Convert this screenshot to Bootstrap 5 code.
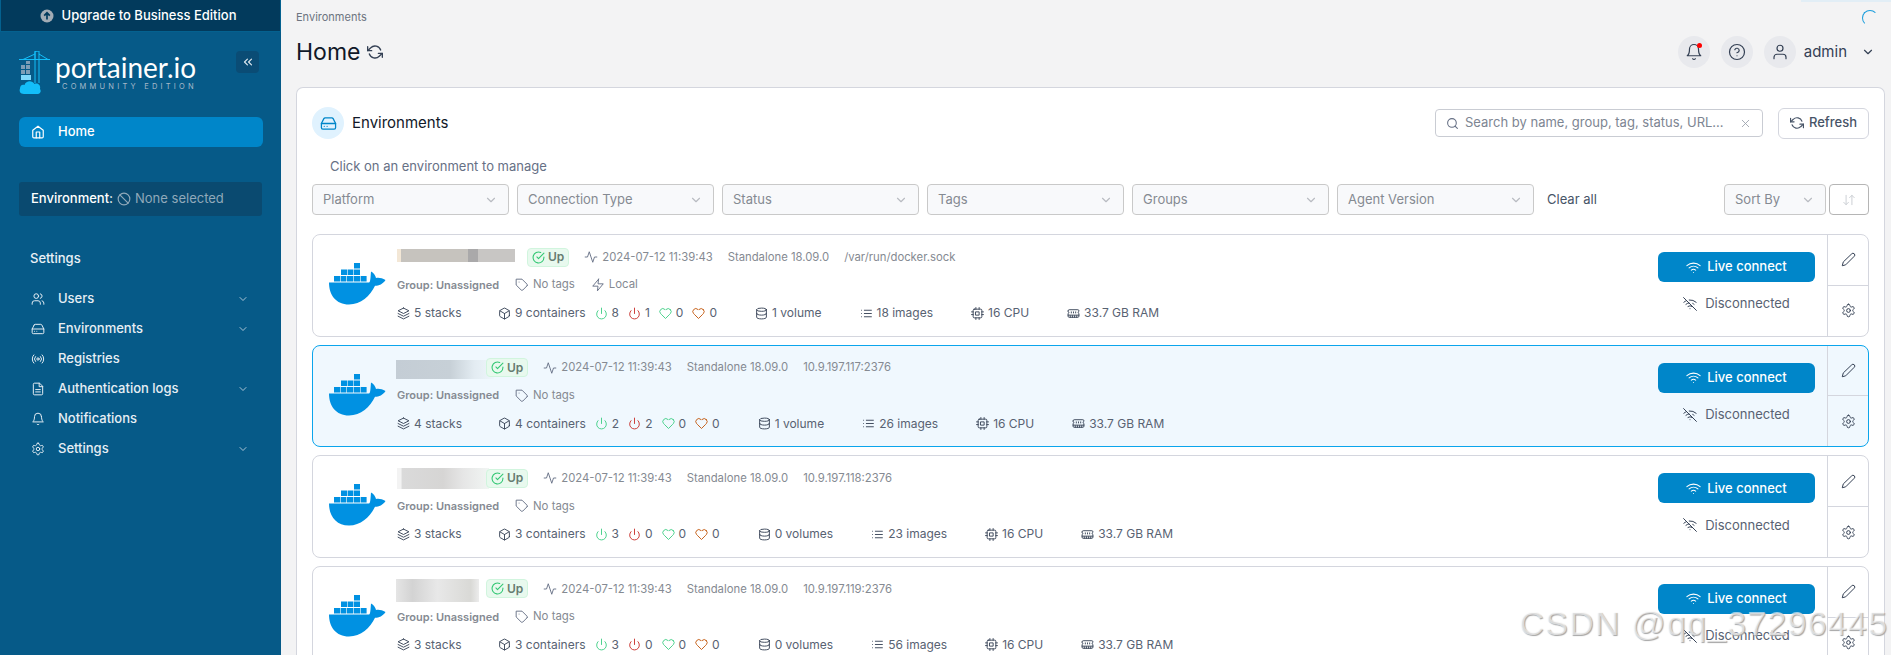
<!DOCTYPE html>
<html lang="en">
<head>
    <meta charset="UTF-8">
    <title>Portainer - Home</title>
    <link href="https://cdn.jsdelivr.net/npm/bootstrap@5.3.0/dist/css/bootstrap.min.css" rel="stylesheet">
    <style>
        html, body { height: 100%; overflow: hidden; }
        body { background: #f3f3f4; font-family: Inter, "Liberation Sans", sans-serif; font-size: 13px; color: #344054; }
        .ico { width: 14px; height: 14px; fill: none; stroke: currentColor; stroke-width: 2; stroke-linecap: round; stroke-linejoin: round; flex: none; }

        .side-bar { width: 281px; height: 655px; background: #065a88; color: #e6eef4; flex: none; }
        .upgrade-bar { height: 32px; background: #023a5c; border: 1px solid #04618f; border-top: 0; color: #fff; font-weight: 500; font-size: 13px; padding-right: 5px; }
        .up-dot { width: 14px; height: 14px; }
        .logo-zone { height: 85px; padding: 19px 18px 0 19px; }
        .logo-word { font-family: Lato, sans-serif; font-weight: 400; font-size: 28px; line-height: 30px; color: #fff; margin-top: 1px; }
        .logo-sub { font-size: 7.5px; line-height: 9px; letter-spacing: 3.2px; color: #a5b9c8; padding-left: 7px; white-space: nowrap; }
        .collapse-btn { width: 23px; height: 22px; background: #0a4c75; border-radius: 4px; color: #dfe8ee; margin-left: auto; margin-right: 4px; }
        .nav-home { margin: 0 18px 0 19px; height: 30px; background: #0086c9; border-radius: 6px; color: #fff; padding-left: 12px; gap: 13px; font-weight: 500; }
        .env-pick { margin: 35px 19px 0; height: 34px; background: #0a4a70; border-radius: 3px; padding-left: 12px; color: #fff; font-weight: 500; gap: 4px; }
        .env-pick .none-sel { color: #90a9ba; font-weight: 400; gap: 4px; }
        .side-head { margin: 33px 0 0 30px; height: 20px; font-weight: 500; font-size: 13px; color: #eaf1f6; }
        .side-menu { margin-top: 15px; padding: 0 32px 0 31px; }
        .side-item { height: 30px; gap: 13px; font-weight: 500; color: #e6eef4; }
        .side-item .caret-ico { margin-left: auto; width: 12px; height: 12px; color: #c7d6e1; }
        .side-item .ico { stroke-width: 1.7; }

        .main-pane { padding: 0 6px 0 15px; min-width: 0; }
        .page-head { height: 87px; position: relative; }
        .crumb { font-size: 11px; color: #6c7480; padding-top: 11px; line-height: 13px; }
        .page-title { font-size: 23px; font-weight: 400; color: #101828; margin: 0; line-height: 28px; }
        .title-row { margin-top: 14px; gap: 7px; }
        .title-row .ico { width: 16px; height: 16px; color: #344054; }
        .round-btn { width: 32px; height: 32px; border-radius: 50%; background: #e8e9ed; color: #344054; position: relative; }
        .round-btn .ico { width: 18px; height: 18px; stroke-width: 1.6; }
        .bell-dot { position: absolute; top: 7px; right: 8px; width: 5px; height: 5px; border-radius: 50%; background: #f00; }
        .head-tools { position: absolute; top: 36px; right: 10px; gap: 11px; }
        .admin-name { font-size: 15px; color: #344054; margin-left: -3px; margin-right: 28px; }
        .spin-arc { position: absolute; top: 10px; right: 7px; width: 16px; height: 16px; border-radius: 50%; border: 1px solid transparent; border-top-color: #1a9ddc; border-left-color: #1a9ddc; }
        .load-bar { position: absolute; top: 0; right: -6px; width: 90px; height: 2px; background: #e2eef6; }

        .env-box { background: #fff; border: 1px solid #d4d6de; border-bottom: 0; border-radius: 7px 7px 0 0; padding: 19px 15px 0 15px; height: 568px; overflow: hidden; }
        .box-icon { width: 32px; height: 32px; border-radius: 50%; background: #e0f2fe; color: #0086c9; }
        .box-icon .ico { width: 17px; height: 17px; stroke-width: 1.8; }
        .box-title { font-size: 15px; font-weight: 400; color: #101828; margin-left: 8px; }
        .search-box { width: 328px; height: 28px; border: 1px solid #c9ccd3; border-radius: 4px; padding: 0 10px; gap: 6px; color: #667085; margin-left: auto; }
        .search-box .ico { width: 13px; height: 13px; }
        .search-txt { color: #7d8592; flex-grow: 1; font-size: 13px; white-space: nowrap; }
        .search-box .x-ico { color: #9aa1ac; width: 13px; height: 13px; stroke-width: 1.6; }
        .refresh-btn { width: 91px; height: 31px; margin-left: 15px; border: 1px solid #d4d6de; border-radius: 6px; background: #fff; color: #475467; font-size: 13px; font-weight: 500; padding: 0; gap: 5px; }
        .refresh-btn .ico { width: 14px; height: 14px; }
        .click-hint { margin: 17px 0 0 18px; height: 20px; color: #667085; line-height: 20px; font-size: 13px; }
        .filter-row { margin-top: 8px; gap: 8px; }
        .filter-sel { width: 197px; height: 31px; border: 1px solid #c9c9c9; border-radius: 4px; background: #f8f9fb; padding: 0 10px; color: #858a92; font-size: 13px; }
        .filter-sel .ico { margin-left: auto; width: 14px; height: 14px; color: #b9bcc2; }
        .clear-all { color: #475467; font-weight: 400; font-size: 13px; margin-left: 5px; }
        .sort-sel { width: 102px; margin-left: auto; }
        .order-btn { width: 40px; height: 31px; border: 1px solid #b5b5b5; border-radius: 4px; background: #fff; color: #c8ccd2; margin-left: -5px; }
        .order-btn .ico { width: 14px; height: 14px; stroke-width: 1.6; }

        .env-list { margin-top: 19px; }
        .env-item { height: 102.67px; margin-bottom: 8px; border: 1px solid #d4d6de; border-radius: 8px; background: #fff; }
        .env-item.picked { background: #f0f8fe; border-color: #0ba5ec; }
        .whale-ico { width: 57px; height: 42px; margin: 28px 11px 0 16px; flex: none; }
        .env-info { padding-top: 12px; min-width: 0; }
        .info-line { height: 20px; white-space: nowrap; font-size: 12px; }
        .info-line + .info-line { margin-top: 8px; }
        .line-one { color: #858a92; font-size: 11.3px; }
        .name-cell { position: relative; height: 20px; flex: none; width: 89px; }
        .name-cell.wide-name { width: 130px; }
        .name-mask { position: absolute; left: 0; display: block; }
        .mask-a { width: 118px; top: 2px; height: 13px; background: linear-gradient(90deg, #f3e7d6 0 3%, #c6c3be 3% 60%, #aaa9aa 60% 69%, #c8c6c4 69%); }
        .mask-b { width: 98px; top: 2px; height: 19px; left: -1px; background: linear-gradient(90deg, #c4cdd5 0, #c7d0d7 55%, #e3ecf2 80%, #eef6fb); }
        .mask-c { width: 92px; top: 0; height: 21px; background: linear-gradient(90deg, #f3f3f3 0 4%, #dadada 6%, #d6d5d4 50%, #e6e6e6 72%, #f1f5f3); }
        .mask-d { width: 83px; top: 0; height: 23px; left: -1px; background: linear-gradient(90deg, #e5e5e5 0, #d3d3d3 20%, #e8e8e8 50%, #d9d9d6 90%, #ececec); }
        .up-tag { height: 19px; padding: 0 4px; border: 1px solid #d1f5de; border-radius: 4px; background: #e8f9ee; color: #667c70; font-weight: 600; font-size: 12px; gap: 3px; margin-right: 15px; flex: none; position: relative; }
        .line-one .up-tag .ico { color: #32c773; width: 13px; height: 13px; stroke-width: 2; }
        .line-one .ico, .group-line .ico { width: 14px; height: 14px; color: #667085; stroke-width: 1.6; }
        .with-gap { gap: 4px; }
        .line-one .fact { margin-right: 15px; }
        .group-line { color: #858a92; gap: 16px; font-size: 11.4px; }
        .group-line b { font-weight: 600; font-size: 11px; }
        .stat-line { color: #586272; }
        .stat-line .ico { width: 13px; height: 13px; color: #344054; stroke-width: 1.7; }
        .stat-stacks { width: 101px; flex: none; }
        .stat-group { margin-right: 38px; }
        .hp-set { gap: 9px; margin-left: 9px; }
        .hp-set .with-gap { gap: 4px; }
        .stat-line .hp-set .ok { color: #3fcf85; }
        .stat-line .hp-set .bad { color: #c9302c; }
        .stat-line .hp-set .warn { color: #c2570c; }
        .act-zone { width: 157px; margin: 17px 12px 0 auto; flex: none; }
        .live-btn { height: 30px; width: 157px; background: #0086c9; border: 0; border-radius: 6px; color: #fff; font-size: 13px; font-weight: 500; padding: 0; gap: 6px; }
        .live-btn .ico { width: 15px; height: 15px; stroke-width: 1.7; }
        .off-state { margin-top: 11px; height: 22px; color: #586272; gap: 8px; font-size: 13px; }
        .off-state .ico { color: #344054; stroke-width: 1.7; }
        .side-acts { width: 41px; border-left: 1px solid #d4d6de; flex: none; }
        .side-acts > div { flex: 1 1 0; color: #344054; }
        .side-acts > div + div { border-top: 1px solid #d4d6de; }
        .side-acts .ico { stroke-width: 1.6; width: 15px; height: 15px; }
        .wm-text { position: absolute; right: 3px; bottom: 15px; font-family: "Liberation Sans", sans-serif; font-size: 34px; line-height: 34px; letter-spacing: 1.2px; color: rgba(255,255,255,.6); text-shadow: 1px 1px 1px #a5a5a5; white-space: nowrap; }
    </style>
</head>
<body class="d-flex position-relative">
    <svg width="0" height="0" class="position-absolute">
        <symbol id="i-home" viewBox="0 0 24 24"><path d="M3 9l9-7 9 7v11a2 2 0 0 1-2 2H5a2 2 0 0 1-2-2z"/><polyline points="9 22 9 12 15 12 15 22"/></symbol>
        <symbol id="i-users" viewBox="0 0 24 24"><path d="M16 21v-2a4 4 0 0 0-4-4H6a4 4 0 0 0-4 4v2"/><circle cx="9" cy="7" r="4"/><path d="M22 21v-2a4 4 0 0 0-3-3.87"/><path d="M16 3.13a4 4 0 0 1 0 7.75"/></symbol>
        <symbol id="i-drive" viewBox="0 0 24 24"><line x1="22" y1="12" x2="2" y2="12"/><path d="M5.45 5.11 2 12v6a2 2 0 0 0 2 2h16a2 2 0 0 0 2-2v-6l-3.45-6.89A2 2 0 0 0 16.76 4H7.24a2 2 0 0 0-1.79 1.11z"/><line x1="6" y1="16" x2="6.01" y2="16"/><line x1="10" y1="16" x2="10.01" y2="16"/></symbol>
        <symbol id="i-radio" viewBox="0 0 24 24"><circle cx="12" cy="12" r="2"/><path d="M16.24 7.76a6 6 0 0 1 0 8.49m-8.48-.01a6 6 0 0 1 0-8.49m11.31-2.82a10 10 0 0 1 0 14.14m-14.14 0a10 10 0 0 1 0-14.14"/></symbol>
        <symbol id="i-file" viewBox="0 0 24 24"><path d="M14 2H6a2 2 0 0 0-2 2v16a2 2 0 0 0 2 2h12a2 2 0 0 0 2-2V8z"/><polyline points="14 2 14 8 20 8"/><line x1="16" y1="13" x2="8" y2="13"/><line x1="16" y1="17" x2="8" y2="17"/></symbol>
        <symbol id="i-bell" viewBox="0 0 24 24"><path d="M18 8A6 6 0 0 0 6 8c0 7-3 9-3 9h18s-3-2-3-9"/><path d="M13.73 21a2 2 0 0 1-3.46 0"/></symbol>
        <symbol id="i-gear" viewBox="0 0 24 24"><path d="M12.22 2h-.44a2 2 0 0 0-2 2v.18a2 2 0 0 1-1 1.73l-.43.25a2 2 0 0 1-2 0l-.15-.08a2 2 0 0 0-2.73.73l-.22.38a2 2 0 0 0 .73 2.73l.15.1a2 2 0 0 1 1 1.72v.51a2 2 0 0 1-1 1.74l-.15.09a2 2 0 0 0-.73 2.73l.22.38a2 2 0 0 0 2.73.73l.15-.08a2 2 0 0 1 2 0l.43.25a2 2 0 0 1 1 1.73V20a2 2 0 0 0 2 2h.44a2 2 0 0 0 2-2v-.18a2 2 0 0 1 1-1.73l.43-.25a2 2 0 0 1 2 0l.15.08a2 2 0 0 0 2.73-.73l.22-.39a2 2 0 0 0-.73-2.73l-.15-.08a2 2 0 0 1-1-1.74v-.5a2 2 0 0 1 1-1.74l.15-.09a2 2 0 0 0 .73-2.73l-.22-.38a2 2 0 0 0-2.73-.73l-.15.08a2 2 0 0 1-2 0l-.43-.25a2 2 0 0 1-1-1.73V4a2 2 0 0 0-2-2z"/><circle cx="12" cy="12" r="3"/></symbol>
        <symbol id="i-down" viewBox="0 0 24 24"><polyline points="6 9 12 15 18 9"/></symbol>
        <symbol id="i-dleft" viewBox="0 0 24 24"><polyline points="11 17 6 12 11 7"/><polyline points="18 17 13 12 18 7"/></symbol>
        <symbol id="i-sync" viewBox="0 0 24 24"><path d="M1 4v6h6"/><path d="M23 20v-6h-6"/><path d="M20.49 9A9 9 0 0 0 5.64 5.64L1 10m22 4-4.64 4.36A9 9 0 0 1 3.51 15"/></symbol>
        <symbol id="i-help" viewBox="0 0 24 24"><circle cx="12" cy="12" r="10"/><path d="M9.09 9a3 3 0 0 1 5.83 1c0 2-3 3-3 3"/><line x1="12" y1="17" x2="12.01" y2="17"/></symbol>
        <symbol id="i-user" viewBox="0 0 24 24"><path d="M20 21v-2a4 4 0 0 0-4-4H8a4 4 0 0 0-4 4v2"/><circle cx="12" cy="7" r="4"/></symbol>
        <symbol id="i-search" viewBox="0 0 24 24"><circle cx="11" cy="11" r="8"/><line x1="21" y1="21" x2="16.65" y2="16.65"/></symbol>
        <symbol id="i-x" viewBox="0 0 24 24"><line x1="18" y1="6" x2="6" y2="18"/><line x1="6" y1="6" x2="18" y2="18"/></symbol>
        <symbol id="i-pulse" viewBox="0 0 24 24"><polyline points="22 12 18 12 15 21 9 3 6 12 2 12"/></symbol>
        <symbol id="i-check" viewBox="0 0 24 24"><path d="M22 11.08V12a10 10 0 1 1-5.93-9.14"/><polyline points="22 4 12 14.01 9 11.01"/></symbol>
        <symbol id="i-tag" viewBox="0 0 24 24"><path d="M20.59 13.41l-7.17 7.17a2 2 0 0 1-2.83 0L2 12V2h10l8.59 8.59a2 2 0 0 1 0 2.82z"/><line x1="7" y1="7" x2="7.01" y2="7"/></symbol>
        <symbol id="i-zap" viewBox="0 0 24 24"><polygon points="13 2 3 14 12 14 11 22 21 10 12 10 13 2"/></symbol>
        <symbol id="i-layers" viewBox="0 0 24 24"><polygon points="12 2 2 7 12 12 22 7 12 2"/><polyline points="2 17 12 22 22 17"/><polyline points="2 12 12 17 22 12"/></symbol>
        <symbol id="i-box" viewBox="0 0 24 24"><path d="M21 16V8a2 2 0 0 0-1-1.73l-7-4a2 2 0 0 0-2 0l-7 4A2 2 0 0 0 3 8v8a2 2 0 0 0 1 1.73l7 4a2 2 0 0 0 2 0l7-4A2 2 0 0 0 21 16z"/><polyline points="3.27 6.96 12 12.01 20.73 6.96"/><line x1="12" y1="22.08" x2="12" y2="12"/></symbol>
        <symbol id="i-power" viewBox="0 0 24 24"><path d="M18.36 6.64a9 9 0 1 1-12.73 0"/><line x1="12" y1="2" x2="12" y2="12"/></symbol>
        <symbol id="i-heart" viewBox="0 0 24 24"><path d="M20.84 4.61a5.5 5.5 0 0 0-7.78 0L12 5.67l-1.06-1.06a5.5 5.5 0 0 0-7.78 7.78l1.06 1.06L12 21.23l7.78-7.78 1.06-1.06a5.5 5.5 0 0 0 0-7.78z"/></symbol>
        <symbol id="i-db" viewBox="0 0 24 24"><ellipse cx="12" cy="5" rx="9" ry="3"/><path d="M21 12c0 1.66-4 3-9 3s-9-1.34-9-3"/><path d="M3 5v14c0 1.66 4 3 9 3s9-1.34 9-3V5"/></symbol>
        <symbol id="i-list" viewBox="0 0 24 24"><line x1="8" y1="6" x2="21" y2="6"/><line x1="8" y1="12" x2="21" y2="12"/><line x1="8" y1="18" x2="21" y2="18"/><line x1="3" y1="6" x2="3.01" y2="6"/><line x1="3" y1="12" x2="3.01" y2="12"/><line x1="3" y1="18" x2="3.01" y2="18"/></symbol>
        <symbol id="i-cpu" viewBox="0 0 24 24"><rect x="4" y="4" width="16" height="16" rx="2"/><rect x="9" y="9" width="6" height="6"/><line x1="9" y1="1" x2="9" y2="4"/><line x1="15" y1="1" x2="15" y2="4"/><line x1="9" y1="20" x2="9" y2="23"/><line x1="15" y1="20" x2="15" y2="23"/><line x1="20" y1="9" x2="23" y2="9"/><line x1="20" y1="14" x2="23" y2="14"/><line x1="1" y1="9" x2="4" y2="9"/><line x1="1" y1="14" x2="4" y2="14"/></symbol>
        <symbol id="i-ram" viewBox="0 0 24 24"><path d="M6 19v-3"/><path d="M10 19v-3"/><path d="M14 19v-3"/><path d="M18 19v-3"/><path d="M8 11V9"/><path d="M16 11V9"/><path d="M12 11V9"/><path d="M2 15h20"/><path d="M2 7a2 2 0 0 1 2-2h16a2 2 0 0 1 2 2v1.1a2 2 0 0 0 0 3.837V17a2 2 0 0 1-2 2H4a2 2 0 0 1-2-2v-5.1a2 2 0 0 0 0-3.837Z"/></symbol>
        <symbol id="i-wifi" viewBox="0 0 24 24"><path d="M5 12.55a11 11 0 0 1 14.08 0"/><path d="M1.42 9a16 16 0 0 1 21.16 0"/><path d="M8.53 16.11a6 6 0 0 1 6.95 0"/><line x1="12" y1="20" x2="12.01" y2="20"/></symbol>
        <symbol id="i-wifioff" viewBox="0 0 24 24"><line x1="1" y1="1" x2="23" y2="23"/><path d="M16.72 11.06A10.94 10.94 0 0 1 19 12.55"/><path d="M5 12.55a10.94 10.94 0 0 1 5.17-2.39"/><path d="M10.71 5.05A16 16 0 0 1 22.58 9"/><path d="M1.42 9a15.91 15.91 0 0 1 4.7-2.88"/><path d="M8.53 16.11a6 6 0 0 1 6.95 0"/><line x1="12" y1="20" x2="12.01" y2="20"/></symbol>
        <symbol id="i-pen" viewBox="0 0 24 24"><path d="M17 3a2.85 2.83 0 1 1 4 4L7.5 20.5 2 22l1.5-5.5Z"/></symbol>
        <symbol id="i-ban" viewBox="0 0 24 24"><circle cx="12" cy="12" r="10"/><line x1="4.93" y1="4.93" x2="19.07" y2="19.07"/></symbol>
        <symbol id="i-order" viewBox="0 0 24 24"><path d="m3 16 4 4 4-4"/><path d="M7 20V4"/><path d="m21 8-4-4-4 4"/><path d="M17 4v16"/></symbol>
        <symbol id="i-whale" viewBox="0 0 57 42">
            <g fill="#0091e2">
                <rect x="25" y="0" width="6" height="5.5"/>
                <rect x="12" y="6.5" width="6" height="5.5"/><rect x="18.6" y="6.5" width="5.8" height="5.5"/><rect x="25" y="6.5" width="6" height="5.5"/>
                <rect x="5" y="13" width="6" height="5.5"/><rect x="11.6" y="13" width="5.8" height="5.5"/><rect x="18" y="13" width="6.4" height="5.5"/><rect x="25" y="13" width="6" height="5.5"/><rect x="31.6" y="13" width="6" height="5.5"/>
                <path d="M0 19.5H40C41.5 19.5 41.5 14 42 8.5C45 10 46.5 13 47 15C50 14.5 53 15 56.5 17C54 21 50 22.8 46 22.8C41 33 32 41.5 20 41.5C7 41.5 0 32 0 19.5Z"/>
            </g>
        </symbol>
    </svg>

    <aside class="side-bar">
        <div class="upgrade-bar d-flex align-items-center justify-content-center gap-2">
            <svg class="up-dot" viewBox="0 0 14 14"><circle cx="7" cy="7" r="6.5" fill="#a3acb5"/><path d="M7 10.5V4M4.2 6.6 7 3.8l2.8 2.8" fill="none" stroke="#023a5c" stroke-width="1.7"/></svg>
            <span>Upgrade to Business Edition</span>
        </div>
        <div class="logo-zone d-flex">
            <svg width="32" height="44" viewBox="0 0 32 44" class="flex-none">
                <g fill="none" stroke="#13bef9" stroke-width="1">
                    <path d="M0 8.5H31M16 0V8.5M20 0 16 .5V32M20 0V32M16 3 4 8.5M20 3 29 8.5"/>
                </g>
                <g fill="#7d9db6"><rect x="2" y="14" width="4" height="4"/><rect x="7" y="14" width="4" height="4"/><rect x="2" y="19" width="4" height="4"/><rect x="7" y="19" width="4" height="4"/><rect x="7" y="10" width="4" height="3"/></g>
                <path d="M2 24H12V29H2Z" fill="#7fd8fb"/>
                <path d="M5 43C1 43 0 40 1 37.5 1 35 3 33 5.5 34 7 29.5 13 29 15.5 33 19 31.5 22 34.5 21 38 23 41 20.5 43.5 17 43Z" fill="#13bef9"/>
            </svg>
            <div class="ms-1">
                <div class="logo-word">portainer.io</div>
                <div class="logo-sub">COMMUNITY EDITION</div>
            </div>
            <div class="collapse-btn d-flex align-items-center justify-content-center"><svg class="ico"><use href="#i-dleft"/></svg></div>
        </div>
        <div class="nav-home d-flex align-items-center"><svg class="ico"><use href="#i-home"/></svg><span>Home</span></div>
        <div class="env-pick d-flex align-items-center">
            <span>Environment:</span>
            <span class="none-sel d-flex align-items-center"><svg class="ico"><use href="#i-ban"/></svg>None selected</span>
        </div>
        <div class="side-head">Settings</div>
        <div class="side-menu">
            <div class="side-item d-flex align-items-center"><svg class="ico"><use href="#i-users"/></svg><span>Users</span><svg class="ico caret-ico"><use href="#i-down"/></svg></div>
            <div class="side-item d-flex align-items-center"><svg class="ico"><use href="#i-drive"/></svg><span>Environments</span><svg class="ico caret-ico"><use href="#i-down"/></svg></div>
            <div class="side-item d-flex align-items-center"><svg class="ico"><use href="#i-radio"/></svg><span>Registries</span></div>
            <div class="side-item d-flex align-items-center"><svg class="ico"><use href="#i-file"/></svg><span>Authentication logs</span><svg class="ico caret-ico"><use href="#i-down"/></svg></div>
            <div class="side-item d-flex align-items-center"><svg class="ico"><use href="#i-bell"/></svg><span>Notifications</span></div>
            <div class="side-item d-flex align-items-center"><svg class="ico"><use href="#i-gear"/></svg><span>Settings</span><svg class="ico caret-ico"><use href="#i-down"/></svg></div>
        </div>
    </aside>

    <main class="main-pane flex-grow-1">
        <div class="page-head">
            <div class="crumb">Environments</div>
            <div class="title-row d-flex align-items-center">
                <h1 class="page-title">Home</h1>
                <svg class="ico"><use href="#i-sync"/></svg>
            </div>
            <div class="load-bar"></div>
            <div class="spin-arc"></div>
            <div class="head-tools d-flex align-items-center">
                <div class="round-btn d-flex align-items-center justify-content-center"><svg class="ico"><use href="#i-bell"/></svg><span class="bell-dot"></span></div>
                <div class="round-btn d-flex align-items-center justify-content-center"><svg class="ico"><use href="#i-help"/></svg></div>
                <div class="round-btn d-flex align-items-center justify-content-center"><svg class="ico"><use href="#i-user"/></svg></div>
                <span class="admin-name">admin</span>
                <svg class="ico position-absolute end-0"><use href="#i-down"/></svg>
            </div>
        </div>

        <section class="env-box">
            <div class="d-flex align-items-center">
                <div class="box-icon d-flex align-items-center justify-content-center"><svg class="ico"><use href="#i-drive"/></svg></div>
                <span class="box-title">Environments</span>
                <div class="search-box d-flex align-items-center">
                    <svg class="ico"><use href="#i-search"/></svg>
                    <span class="search-txt">Search by name, group, tag, status, URL...</span>
                    <svg class="ico x-ico"><use href="#i-x"/></svg>
                </div>
                <button class="btn refresh-btn d-flex align-items-center justify-content-center"><svg class="ico"><use href="#i-sync"/></svg>Refresh</button>
            </div>
            <div class="click-hint">Click on an environment to manage</div>
            <div class="filter-row d-flex align-items-center">
                <div class="filter-sel d-flex align-items-center"><span>Platform</span><svg class="ico"><use href="#i-down"/></svg></div>
                <div class="filter-sel d-flex align-items-center"><span>Connection Type</span><svg class="ico"><use href="#i-down"/></svg></div>
                <div class="filter-sel d-flex align-items-center"><span>Status</span><svg class="ico"><use href="#i-down"/></svg></div>
                <div class="filter-sel d-flex align-items-center"><span>Tags</span><svg class="ico"><use href="#i-down"/></svg></div>
                <div class="filter-sel d-flex align-items-center"><span>Groups</span><svg class="ico"><use href="#i-down"/></svg></div>
                <div class="filter-sel d-flex align-items-center"><span>Agent Version</span><svg class="ico"><use href="#i-down"/></svg></div>
                <span class="clear-all">Clear all</span>
                <div class="filter-sel sort-sel d-flex align-items-center"><span>Sort By</span><svg class="ico"><use href="#i-down"/></svg></div>
                <div class="order-btn d-flex align-items-center justify-content-center"><svg class="ico"><use href="#i-order"/></svg></div>
            </div>

            <div class="env-list">
                <div class="env-item d-flex">
                    <svg class="whale-ico"><use href="#i-whale"/></svg>
                    <div class="env-info">
                        <div class="info-line line-one d-flex align-items-center">
                            <div class="name-cell wide-name"><span class="name-mask mask-a"></span></div>
                            <span class="up-tag d-flex align-items-center"><svg class="ico"><use href="#i-check"/></svg>Up</span>
                            <span class="fact d-flex align-items-center with-gap"><svg class="ico"><use href="#i-pulse"/></svg>2024-07-12 11:39:43</span>
                            <span class="fact">Standalone 18.09.0</span>
                            <span class="fact">/var/run/docker.sock</span>
                        </div>
                        <div class="info-line group-line d-flex align-items-center">
                            <b>Group: Unassigned</b>
                            <span class="d-flex align-items-center with-gap"><svg class="ico"><use href="#i-tag"/></svg>No tags</span>
                            <span class="d-flex align-items-center with-gap"><svg class="ico"><use href="#i-zap"/></svg>Local</span>
                        </div>
                        <div class="info-line stat-line d-flex align-items-center">
                            <span class="stat-stacks d-flex align-items-center with-gap"><svg class="ico"><use href="#i-layers"/></svg>5 stacks</span>
                            <span class="d-flex align-items-center with-gap"><svg class="ico"><use href="#i-box"/></svg>9 containers</span>
                            <span class="hp-set stat-group d-flex align-items-center">
                                <span class="d-flex align-items-center with-gap"><svg class="ico ok"><use href="#i-power"/></svg>8</span>
                                <span class="d-flex align-items-center with-gap"><svg class="ico bad"><use href="#i-power"/></svg>1</span>
                                <span class="d-flex align-items-center with-gap"><svg class="ico ok"><use href="#i-heart"/></svg>0</span>
                                <span class="d-flex align-items-center with-gap"><svg class="ico warn"><use href="#i-heart"/></svg>0</span>
                            </span>
                            <span class="stat-group d-flex align-items-center with-gap"><svg class="ico"><use href="#i-db"/></svg>1 volume</span>
                            <span class="stat-group d-flex align-items-center with-gap"><svg class="ico"><use href="#i-list"/></svg>18 images</span>
                            <span class="stat-group d-flex align-items-center with-gap"><svg class="ico"><use href="#i-cpu"/></svg>16 CPU</span>
                            <span class="d-flex align-items-center with-gap"><svg class="ico"><use href="#i-ram"/></svg>33.7 GB RAM</span>
                        </div>
                    </div>
                    <div class="act-zone">
                        <button class="btn live-btn d-flex align-items-center justify-content-center"><svg class="ico"><use href="#i-wifi"/></svg>Live connect</button>
                        <div class="off-state d-flex align-items-center justify-content-center"><svg class="ico"><use href="#i-wifioff"/></svg>Disconnected</div>
                    </div>
                    <div class="side-acts d-flex flex-column">
                        <div class="d-flex align-items-center justify-content-center"><svg class="ico"><use href="#i-pen"/></svg></div>
                        <div class="d-flex align-items-center justify-content-center"><svg class="ico"><use href="#i-gear"/></svg></div>
                    </div>
                </div>

                <div class="env-item picked d-flex">
                    <svg class="whale-ico"><use href="#i-whale"/></svg>
                    <div class="env-info">
                        <div class="info-line line-one d-flex align-items-center">
                            <div class="name-cell"><span class="name-mask mask-b"></span></div>
                            <span class="up-tag d-flex align-items-center"><svg class="ico"><use href="#i-check"/></svg>Up</span>
                            <span class="fact d-flex align-items-center with-gap"><svg class="ico"><use href="#i-pulse"/></svg>2024-07-12 11:39:43</span>
                            <span class="fact">Standalone 18.09.0</span>
                            <span class="fact">10.9.197.117:2376</span>
                        </div>
                        <div class="info-line group-line d-flex align-items-center">
                            <b>Group: Unassigned</b>
                            <span class="d-flex align-items-center with-gap"><svg class="ico"><use href="#i-tag"/></svg>No tags</span>
                        </div>
                        <div class="info-line stat-line d-flex align-items-center">
                            <span class="stat-stacks d-flex align-items-center with-gap"><svg class="ico"><use href="#i-layers"/></svg>4 stacks</span>
                            <span class="d-flex align-items-center with-gap"><svg class="ico"><use href="#i-box"/></svg>4 containers</span>
                            <span class="hp-set stat-group d-flex align-items-center">
                                <span class="d-flex align-items-center with-gap"><svg class="ico ok"><use href="#i-power"/></svg>2</span>
                                <span class="d-flex align-items-center with-gap"><svg class="ico bad"><use href="#i-power"/></svg>2</span>
                                <span class="d-flex align-items-center with-gap"><svg class="ico ok"><use href="#i-heart"/></svg>0</span>
                                <span class="d-flex align-items-center with-gap"><svg class="ico warn"><use href="#i-heart"/></svg>0</span>
                            </span>
                            <span class="stat-group d-flex align-items-center with-gap"><svg class="ico"><use href="#i-db"/></svg>1 volume</span>
                            <span class="stat-group d-flex align-items-center with-gap"><svg class="ico"><use href="#i-list"/></svg>26 images</span>
                            <span class="stat-group d-flex align-items-center with-gap"><svg class="ico"><use href="#i-cpu"/></svg>16 CPU</span>
                            <span class="d-flex align-items-center with-gap"><svg class="ico"><use href="#i-ram"/></svg>33.7 GB RAM</span>
                        </div>
                    </div>
                    <div class="act-zone">
                        <button class="btn live-btn d-flex align-items-center justify-content-center"><svg class="ico"><use href="#i-wifi"/></svg>Live connect</button>
                        <div class="off-state d-flex align-items-center justify-content-center"><svg class="ico"><use href="#i-wifioff"/></svg>Disconnected</div>
                    </div>
                    <div class="side-acts d-flex flex-column">
                        <div class="d-flex align-items-center justify-content-center"><svg class="ico"><use href="#i-pen"/></svg></div>
                        <div class="d-flex align-items-center justify-content-center"><svg class="ico"><use href="#i-gear"/></svg></div>
                    </div>
                </div>

                <div class="env-item d-flex">
                    <svg class="whale-ico"><use href="#i-whale"/></svg>
                    <div class="env-info">
                        <div class="info-line line-one d-flex align-items-center">
                            <div class="name-cell"><span class="name-mask mask-c"></span></div>
                            <span class="up-tag d-flex align-items-center"><svg class="ico"><use href="#i-check"/></svg>Up</span>
                            <span class="fact d-flex align-items-center with-gap"><svg class="ico"><use href="#i-pulse"/></svg>2024-07-12 11:39:43</span>
                            <span class="fact">Standalone 18.09.0</span>
                            <span class="fact">10.9.197.118:2376</span>
                        </div>
                        <div class="info-line group-line d-flex align-items-center">
                            <b>Group: Unassigned</b>
                            <span class="d-flex align-items-center with-gap"><svg class="ico"><use href="#i-tag"/></svg>No tags</span>
                        </div>
                        <div class="info-line stat-line d-flex align-items-center">
                            <span class="stat-stacks d-flex align-items-center with-gap"><svg class="ico"><use href="#i-layers"/></svg>3 stacks</span>
                            <span class="d-flex align-items-center with-gap"><svg class="ico"><use href="#i-box"/></svg>3 containers</span>
                            <span class="hp-set stat-group d-flex align-items-center">
                                <span class="d-flex align-items-center with-gap"><svg class="ico ok"><use href="#i-power"/></svg>3</span>
                                <span class="d-flex align-items-center with-gap"><svg class="ico bad"><use href="#i-power"/></svg>0</span>
                                <span class="d-flex align-items-center with-gap"><svg class="ico ok"><use href="#i-heart"/></svg>0</span>
                                <span class="d-flex align-items-center with-gap"><svg class="ico warn"><use href="#i-heart"/></svg>0</span>
                            </span>
                            <span class="stat-group d-flex align-items-center with-gap"><svg class="ico"><use href="#i-db"/></svg>0 volumes</span>
                            <span class="stat-group d-flex align-items-center with-gap"><svg class="ico"><use href="#i-list"/></svg>23 images</span>
                            <span class="stat-group d-flex align-items-center with-gap"><svg class="ico"><use href="#i-cpu"/></svg>16 CPU</span>
                            <span class="d-flex align-items-center with-gap"><svg class="ico"><use href="#i-ram"/></svg>33.7 GB RAM</span>
                        </div>
                    </div>
                    <div class="act-zone">
                        <button class="btn live-btn d-flex align-items-center justify-content-center"><svg class="ico"><use href="#i-wifi"/></svg>Live connect</button>
                        <div class="off-state d-flex align-items-center justify-content-center"><svg class="ico"><use href="#i-wifioff"/></svg>Disconnected</div>
                    </div>
                    <div class="side-acts d-flex flex-column">
                        <div class="d-flex align-items-center justify-content-center"><svg class="ico"><use href="#i-pen"/></svg></div>
                        <div class="d-flex align-items-center justify-content-center"><svg class="ico"><use href="#i-gear"/></svg></div>
                    </div>
                </div>

                <div class="env-item d-flex">
                    <svg class="whale-ico"><use href="#i-whale"/></svg>
                    <div class="env-info">
                        <div class="info-line line-one d-flex align-items-center">
                            <div class="name-cell"><span class="name-mask mask-d"></span></div>
                            <span class="up-tag d-flex align-items-center"><svg class="ico"><use href="#i-check"/></svg>Up</span>
                            <span class="fact d-flex align-items-center with-gap"><svg class="ico"><use href="#i-pulse"/></svg>2024-07-12 11:39:43</span>
                            <span class="fact">Standalone 18.09.0</span>
                            <span class="fact">10.9.197.119:2376</span>
                        </div>
                        <div class="info-line group-line d-flex align-items-center">
                            <b>Group: Unassigned</b>
                            <span class="d-flex align-items-center with-gap"><svg class="ico"><use href="#i-tag"/></svg>No tags</span>
                        </div>
                        <div class="info-line stat-line d-flex align-items-center">
                            <span class="stat-stacks d-flex align-items-center with-gap"><svg class="ico"><use href="#i-layers"/></svg>3 stacks</span>
                            <span class="d-flex align-items-center with-gap"><svg class="ico"><use href="#i-box"/></svg>3 containers</span>
                            <span class="hp-set stat-group d-flex align-items-center">
                                <span class="d-flex align-items-center with-gap"><svg class="ico ok"><use href="#i-power"/></svg>3</span>
                                <span class="d-flex align-items-center with-gap"><svg class="ico bad"><use href="#i-power"/></svg>0</span>
                                <span class="d-flex align-items-center with-gap"><svg class="ico ok"><use href="#i-heart"/></svg>0</span>
                                <span class="d-flex align-items-center with-gap"><svg class="ico warn"><use href="#i-heart"/></svg>0</span>
                            </span>
                            <span class="stat-group d-flex align-items-center with-gap"><svg class="ico"><use href="#i-db"/></svg>0 volumes</span>
                            <span class="stat-group d-flex align-items-center with-gap"><svg class="ico"><use href="#i-list"/></svg>56 images</span>
                            <span class="stat-group d-flex align-items-center with-gap"><svg class="ico"><use href="#i-cpu"/></svg>16 CPU</span>
                            <span class="d-flex align-items-center with-gap"><svg class="ico"><use href="#i-ram"/></svg>33.7 GB RAM</span>
                        </div>
                    </div>
                    <div class="act-zone">
                        <button class="btn live-btn d-flex align-items-center justify-content-center"><svg class="ico"><use href="#i-wifi"/></svg>Live connect</button>
                        <div class="off-state d-flex align-items-center justify-content-center"><svg class="ico"><use href="#i-wifioff"/></svg>Disconnected</div>
                    </div>
                    <div class="side-acts d-flex flex-column">
                        <div class="d-flex align-items-center justify-content-center"><svg class="ico"><use href="#i-pen"/></svg></div>
                        <div class="d-flex align-items-center justify-content-center"><svg class="ico"><use href="#i-gear"/></svg></div>
                    </div>
                </div>
            </div>
        </section>
    </main>
    <div class="wm-text">CSDN @qq_37296445</div>
    <script src="https://cdn.jsdelivr.net/npm/bootstrap@5.3.0/dist/js/bootstrap.bundle.min.js"></script>
</body>
</html>
